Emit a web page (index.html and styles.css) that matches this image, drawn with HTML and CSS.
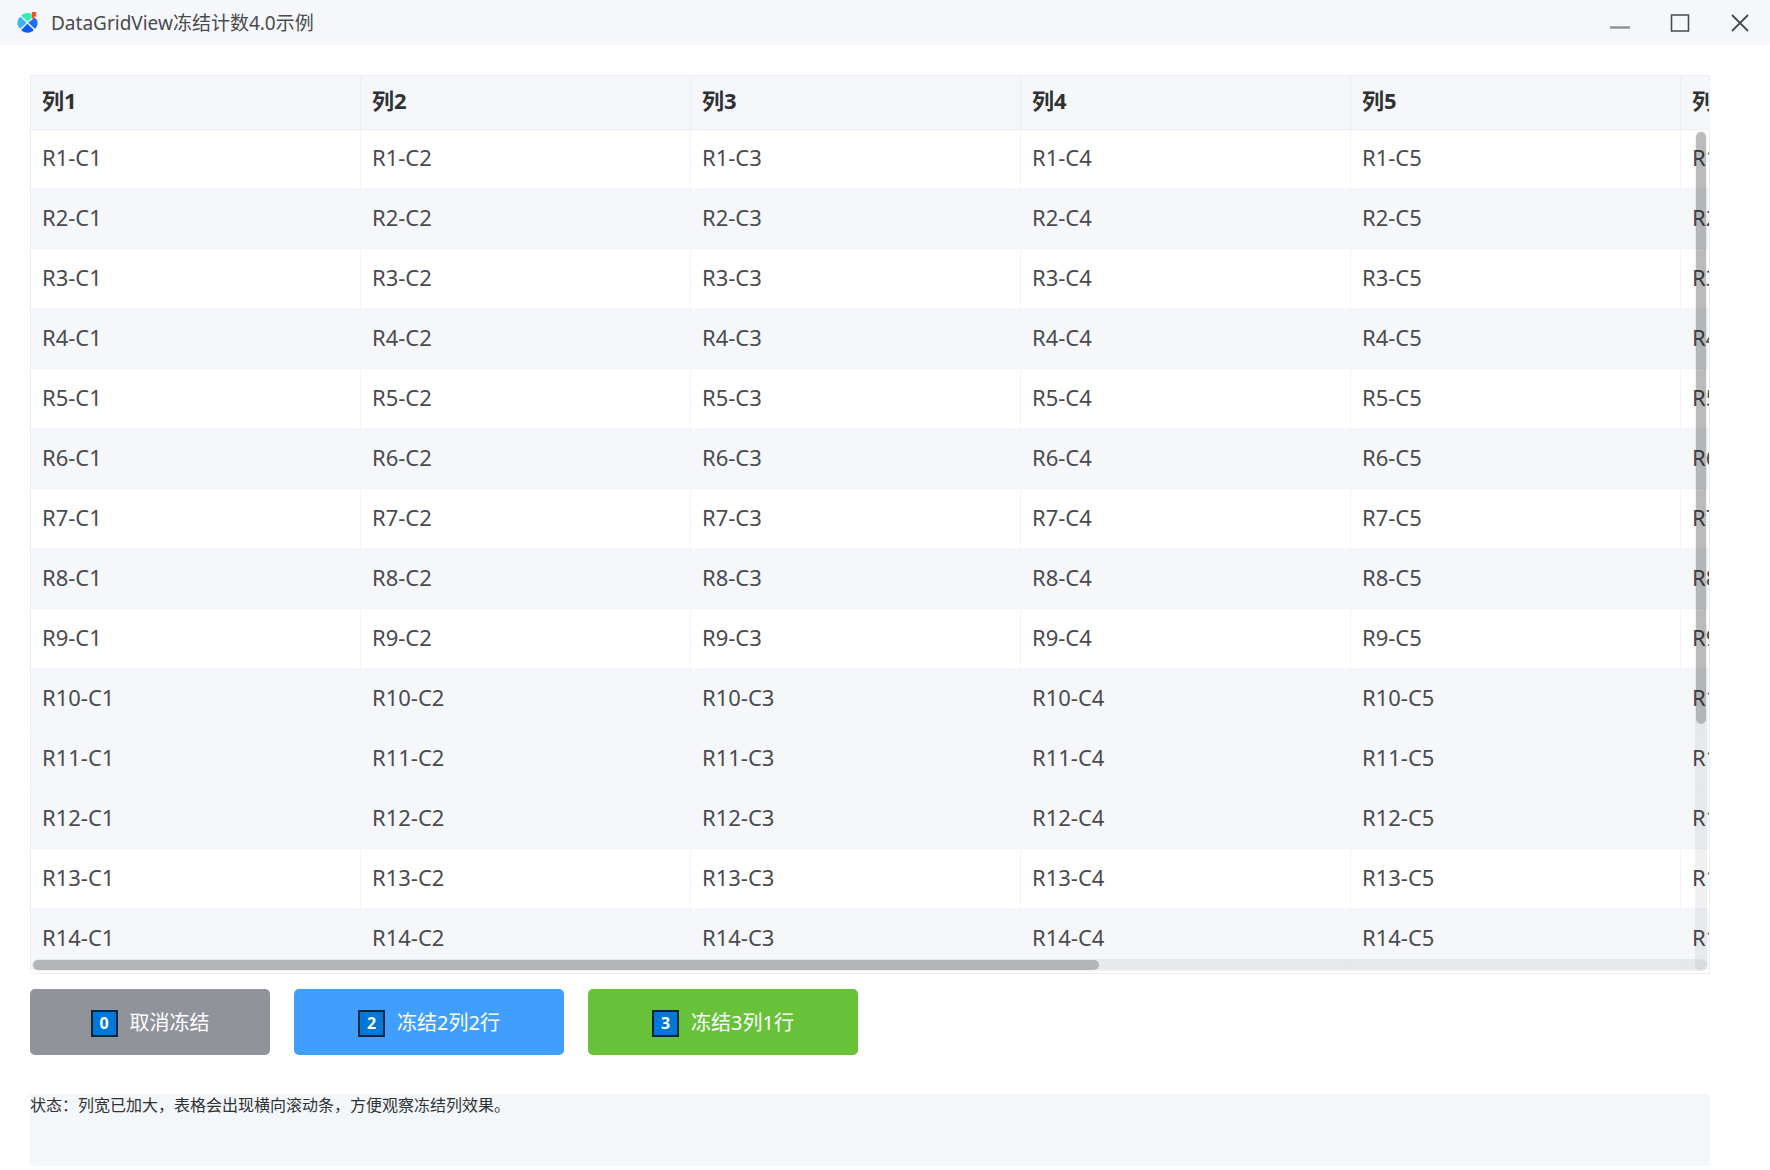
FILE: index.html
```
<!doctype html>
<html lang="zh-CN">
<head>
    <meta charset="utf-8">
    <title>DataGridView冻结计数4.0示例</title>
    <link rel="stylesheet" href="styles.css">
</head>
<body>
    <!--标题栏-->
    <header class="titlebar">
        <svg class="logo" viewBox="0 0 20 20" aria-hidden="true">
            <path d="M10 9.4 3.8 3.4C6 .8 11 .2 14 1.6V4.6h1.2Z" fill="#2ff0b4"/>
            <path d="M9.2 10.2 3.2 4.6C-.6 8-.4 13 3 16Z" fill="#3fb2ff"/>
            <path d="M10.8 10.2 16.6 5.2C20.6 8 20.4 13 17 16Z" fill="#1b6cff"/>
            <path d="M10 11.2 4 17.1C7 20.6 13 20.6 16 17.1Z" fill="#0a5cff"/>
            <path d="M14.2 0h4.6l-1 1.8 1 2.4h-2.4v2h-2.2z" fill="#ff4a1c"/>
        </svg>
        <h1>DataGridView冻结计数4.0示例</h1>
        <div class="win-btns">
            <button type="button" aria-label="最小化">
                <svg viewBox="0 0 20 20"><path d="M0 14.5h20" stroke="#8e9093" stroke-width="2.4"/></svg>
            </button>
            <button type="button" aria-label="最大化">
                <svg viewBox="0 0 20 20"><path d="M1.5 2h17v16h-17z" fill="none" stroke="#4a4b4e" stroke-width="1.6"/></svg>
            </button>
            <button type="button" aria-label="关闭">
                <svg viewBox="0 0 20 20"><path d="M2 2l16 16M18 2 2 18" fill="none" stroke="#4a4b4e" stroke-width="1.8"/></svg>
            </button>
        </div>
    </header>

    <main class="main">
        <!--表格-->
        <div class="grid">
            <table>
                <thead>
                    <tr></tr>
                </thead>
                <tbody></tbody>
            </table>
            <div class="bar bar-y"><div class="thumb"></div></div>
            <div class="bar bar-x"><div class="thumb"></div></div>
        </div>

        <!--按钮-->
        <div class="btns">
            <button type="button" class="btn info"><span class="key">0</span>取消冻结</button>
            <button type="button" class="btn primary"><span class="key">2</span>冻结2列2行</button>
            <button type="button" class="btn success"><span class="key">3</span>冻结3列1行</button>
        </div>

        <p class="status">状态：列宽已加大，表格会出现横向滚动条，方便观察冻结列效果。</p>
    </main>

<script>
    var head = document.querySelector('thead tr'),
        body = document.querySelector('tbody'),
        cols = 6,
        rows = 14;

    for(var c = 1; c <= cols; c++){
        head.innerHTML += '<th scope="col">列' + c + '</th>';
    }

    for(var r = 1; r <= rows; r++){
        // 第11行为当前行
        var html = r === 11 ? '<tr class="current">' : '<tr>';
        for(var i = 1; i <= cols; i++){
            html += '<td>R' + r + '-C' + i + '</td>';
        }
        body.innerHTML += html + '</tr>';
    }
</script>
</body>
</html>
```
FILE: styles.css
```
*{margin:0; padding:0; box-sizing:border-box;}

body{
    display:flex;
    flex-direction:column;
    height:100vh;
    font-family:"Noto Sans","Noto Sans CJK SC",sans-serif;
    font-size:20px;
    color:#303133;
    background:#fff;
}
button{
    font:inherit;
    border:0;
    cursor:pointer;
}

/* 标题栏 */
.titlebar{
    display:flex;
    align-items:center;
    height:45px;
    padding:0 20px 0 17px;
    background:#f5f7fa;
}
.logo{
    width:21px;
    height:21px;
}
.titlebar h1{
    margin-left:13px;
    font-size:19px;
    line-height:44px;
    font-weight:normal;
    color:#4a4b4e;
}
.win-btns{
    display:flex;
    gap:40px;
    margin-left:auto;
}
.win-btns button{
    width:20px;
    height:20px;
    background:none;
}
.win-btns svg{
    display:block;
}

.main{
    flex:1;
    display:flex;
    flex-direction:column;
    min-height:0;
    padding:30px 60px 4px 30px;
}

/* 表格 */
.grid{
    position:relative;
    flex:1;
    min-height:0;
    overflow:hidden;
    border:1px solid #ebeef5;
}
table{
    width:1980px;
    table-layout:fixed;
    border-collapse:separate;
    border-spacing:0;
    font-size:22px;
    line-height:30px;
    text-align:left;
}
th,td{
    padding:0 10px 4px 11px;
    border-right:1px solid #f1f4f8;
    border-bottom:1px solid #f1f4f8;
}
th{
    height:54px;
    padding-bottom:6px;
    background:#f5f7fa;
    border-color:#ebeef5;
}
td{
    height:60px;
    color:#4a4b4e;
}
tbody tr:first-child td{
    height:59px;
}
tr:nth-child(even) td,
.current td{
    background:#f5f7fa;
}

/* 滚动条 */
.bar{
    position:absolute;
    border-radius:6px;
    background:rgba(0,0,0,.06);
}
.bar-y{
    top:55px;
    right:2px;
    bottom:2px;
    width:12px;
    padding:1px;
}
.bar-x{
    left:1px;
    right:2px;
    bottom:2px;
    height:12px;
    padding:1px;
}
.thumb{
    border-radius:5px;
    background:rgba(0,0,0,.22);
}
.bar-y .thumb{height:592px;}
.bar-x .thumb{width:1066px; height:10px;}

/* 按钮 */
.btns{
    display:flex;
    gap:24px;
    margin-top:15px;
}
.btn{
    display:flex;
    align-items:center;
    justify-content:center;
    gap:12px;
    width:270px;
    height:66px;
    padding-bottom:2px;
    border-radius:5px;
    color:#fff;
}
.info{width:240px; background:#909399;}
.primary{background:#409eff;}
.success{background:#67c23a;}
.key{
    width:27px;
    height:27px;
    margin-top:4px;
    border:2px solid #0b2440;
    background:#0078d7;
    font-size:16px;
    line-height:23px;
    font-weight:bold;
    text-align:center;
}

.status{
    height:72px;
    margin-top:39px;
    font-size:16px;
    line-height:22px;
    background:#f3f7fa;
}
```
